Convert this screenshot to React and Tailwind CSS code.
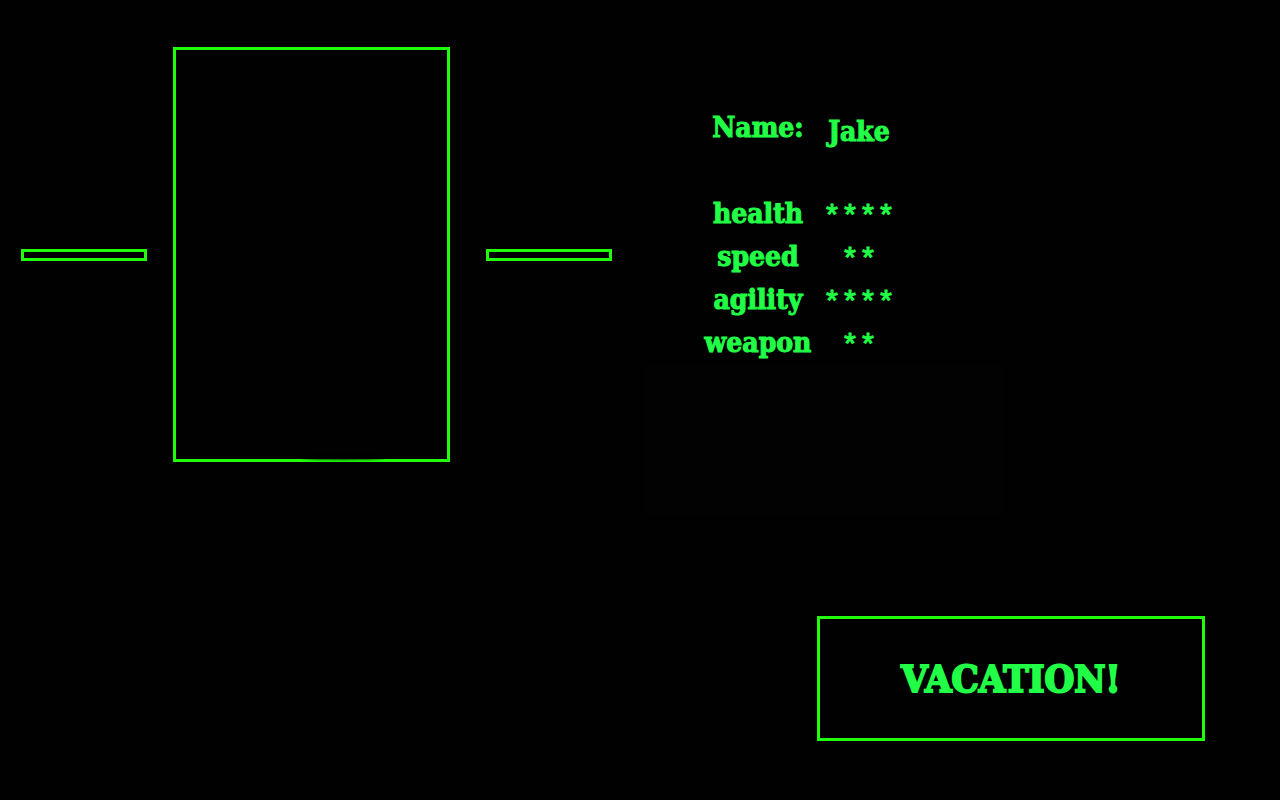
const stats = [
  { label: 'health', value: 4 },
  { label: 'speed', value: 2 },
  { label: 'agility', value: 4 },
  { label: 'weapon', value: 2 },
]

function Arm() {
  return <div className="h-3 w-[126px] shrink-0 border-3 border-[#21ff0a]" />
}

function Portrait() {
  return (
    <section aria-label="Character" className="flex items-center pt-[47px] pl-[21px]">
      <Arm />
      <div className="relative mr-9 ml-[26px] h-[415px] w-[277px] shrink-0 border-3 border-[#21ff0a]">
        <div className="absolute -bottom-px left-[125px] h-1 w-[84px] rounded-[50%] bg-black/70 blur-[1px]" />
      </div>
      <Arm />
    </section>
  )
}

function Stats() {
  return (
    <section aria-label="Statistics" className="pt-[106px] pl-[5px]">
      <table className="ml-[50px] table-fixed border-collapse text-center text-[28px] leading-[43px] [-webkit-text-stroke:1px_#21ff47]">
        <colgroup>
          <col className="w-[126px]" />
          <col className="w-[76px]" />
        </colgroup>
        <tbody>
          <tr className="h-[86px] align-top">
            <th scope="row" className="p-0">Name:</th>
            <td className="p-0 pt-1 font-bold">Jake</td>
          </tr>
          {stats.map((stat) => (
            <tr key={stat.label} className="h-[43px]">
              <th scope="row" className="p-0">{stat.label}</th>
              <td className="p-0 pt-2.5 align-top font-['Liberation_Mono',monospace] text-[30px] leading-[33px]">
                {'*'.repeat(stat.value)}
              </td>
            </tr>
          ))}
        </tbody>
      </table>
      <div className="mt-0.5 h-[149px] w-[359px] bg-[#010201]" />
    </section>
  )
}

export default function App() {
  return (
    <main className="flex min-h-screen flex-col justify-between bg-[#000100] font-['DejaVu_Serif_Condensed','DejaVu_Serif',serif] text-[#21ff47]">
      <div className="grid grid-cols-2 items-start">
        <Portrait />
        <Stats />
      </div>
      <div className="flex justify-end pr-[75px] pb-[59px]">
        <button
          type="button"
          className="h-[125px] w-[388px] border-3 border-[#21ff0a] text-[38px] font-bold [-webkit-text-stroke:2px_#21ff47]"
        >
          VACATION!
        </button>
      </div>
    </main>
  )
}
